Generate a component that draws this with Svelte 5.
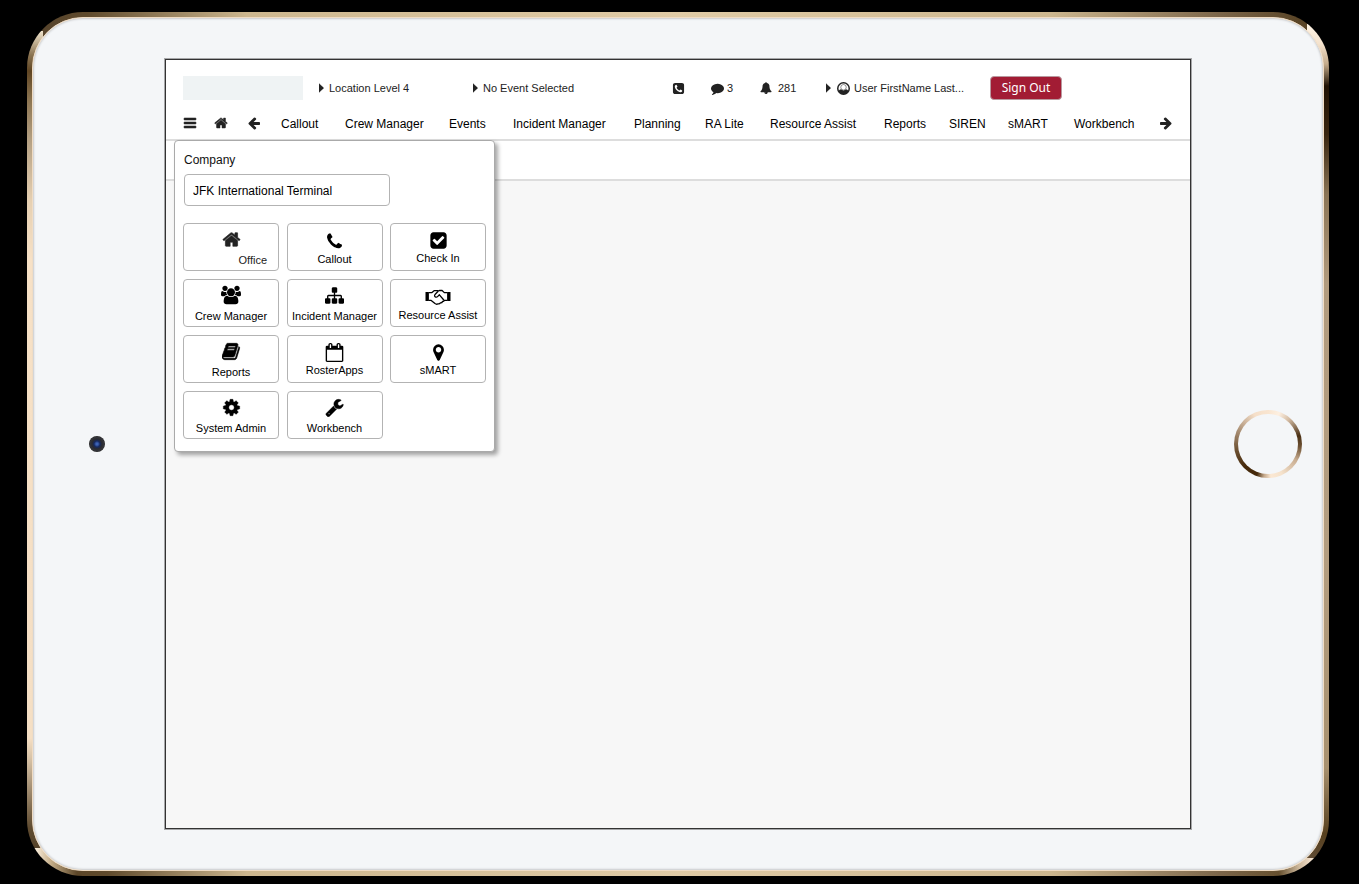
<script>
  const paths = {
    bars: "M1664 1344v128q0 26-19 45t-45 19h-1408q-26 0-45-19t-19-45v-128q0-26 19-45t45-19h1408q26 0 45 19t19 45zm0-512v128q0 26-19 45t-45 19h-1408q-26 0-45-19t-19-45v-128q0-26 19-45t45-19h1408q26 0 45 19t19 45zm0-512v128q0 26-19 45t-45 19h-1408q-26 0-45-19t-19-45v-128q0-26 19-45t45-19h1408q26 0 45 19t19 45z",
    home: "M1472 992v480q0 26-19 45t-45 19h-384v-384h-256v384h-384q-26 0-45-19t-19-45v-480q0-1 .5-3t.5-3l575-474 575 474q1 2 1 6zm223-69l-62 74q-8 9-21 11h-3q-13 0-21-7l-692-577-692 577q-12 8-24 7-13-2-21-11l-62-74q-8-10-7-23.5t11-21.5l719-599q32-26 76-26t76 26l244 204v-195q0-14 9-23t23-9h192q14 0 23 9t9 23v408l219 182q10 8 11 21.5t-7 23.5z",
    arrow: "M1664 896v128q0 53-32.5 90.5t-84.5 37.5h-704l293 294q38 36 38 90t-38 90l-75 76q-37 37-90 37-52 0-91-37l-651-652q-37-37-37-90 0-52 37-91l651-650q38-38 91-38 52 0 90 38l75 74q38 38 38 91t-38 91l-293 293h704q52 0 84.5 37.5t32.5 90.5z",
    phoneSquare: "M1408 1193q0-11-2-16t-18-16.5-40.5-25-47.5-26.5-45.5-25-28.5-15q-5-3-19-13t-25-15-21-5q-15 0-36.5 20.5t-39.5 45-38.5 45-33.5 20.5q-7 0-16.5-3.5t-15.5-6.5-17-9.5-14-8.5q-99-55-170-126.5t-127-170.5q-2-3-8.5-14t-9.5-17-6.5-15.5-3.5-16.5q0-13 20.5-33.5t45-38.5 45-39.5 20.5-36.5q0-10-5-21t-15-25-13-19q-3-6-15-28.5t-25-45.5-26.5-47.5-25-40.5-16.5-18-16-2q-48 0-101 22-46 21-80 94.5t-34 130.5q0 16 2.5 34t5 30.5 9 33 10 29.5 12.5 33 11 30q60 164 216.5 320.5t320.5 216.5q6 2 30 11t33 12.5 29.5 10 33 9 30.5 5 34 2.5q57 0 130.5-34t94.5-80q22-53 22-101zm256-777v960q0 119-84.5 203.5t-203.5 84.5h-960q-119 0-203.5-84.5t-84.5-203.5v-960q0-119 84.5-203.5t203.5-84.5h960q119 0 203.5 84.5t84.5 203.5z",
    comment: "M1792 896q0 174-120 321.5t-326 233-450 85.5q-70 0-145-8-198 175-460 242-49 14-114 22-17 2-30.5-9t-17.5-29v-1q-3-4-.5-12t2-10 4.5-9.5l6-9 7-8.5 8-9q7-8 31-34.5t34.5-38 31-39.5 32.5-51 27-59 26-76q-157-89-247.5-220t-90.5-281q0-130 71-248.5t191-204.5 286-136.5 348-50.5q244 0 450 85.5t326 233 120 321.5z",
    bell: "M912 1696q0-16-16-16-59 0-101.5-42.5t-42.5-101.5q0-16-16-16t-16 16q0 73 51.5 124.5t124.5 51.5q16 0 16-16zm816-288q0 52-38 90t-90 38h-448q0 106-75 181t-181 75-181-75-75-181h-448q-52 0-90-38t-38-90q50-42 91-88t85-119.5 74.5-158.5 50-206 19.5-260q0-152 117-282.5t307-158.5q-8-19-8-39 0-40 28-68t68-28 68 28 28 68q0 20-8 39 190 28 307 158.5t117 282.5q0 139 19.5 260t50 206 74.5 158.5 85 119.5 91 88z",
    phone: "M1600 1240q0 27-10 70.5t-21 68.5q-21 50-122 106-94 51-186 51-27 0-53-3.5t-57.5-12.5-47-14.5-55.5-20.5-49-18q-98-35-175-83-127-79-264-216t-216-264q-48-77-83-175-3-9-18-49t-20.5-55.5-14.5-47-12.5-57.5-3.5-53q0-92 51-186 56-101 106-122 25-11 68.5-21t70.5-10q14 0 21 3 18 6 53 76 11 19 30 54t35 63.5 31 53.5q3 4 17.5 25t21.5 35.5 7 28.5q0 20-28.5 50t-62 55-62 53-28.5 46q0 9 5 22.5t8.5 20.5 14 24 11.5 19q76 137 174 235t235 174q2 1 19 11.5t24 14 20.5 8.5 22.5 5q18 0 46-28.5t53-62 55-62 50-28.5q14 0 28.5 7t35.5 21.5 25 17.5q25 15 53.5 31t63.5 35 54 30q70 35 76 53 3 7 3 21z",
    check: "M813 1299l614-614q19-19 19-45t-19-45l-102-102q-19-19-45-19t-45 19l-467 467-211-211q-19-19-45-19t-45 19l-102 102q-19 19-19 45t19 45l358 358q19 19 45 19t45-19zm851-883v960q0 119-84.5 203.5t-203.5 84.5h-960q-119 0-203.5-84.5t-84.5-203.5v-960q0-119 84.5-203.5t203.5-84.5h960q119 0 203.5 84.5t84.5 203.5z",
    users: "M529 896q-162 5-265 128h-134q-82 0-138-40.5t-56-118.5q0-353 124-353 6 0 43.500 21t97.500 42.500 119 21.500q67 0 133-23-5 37-5 66 0 139 81 256zm1071 637q0 120-73 189.500t-194 69.500h-874q-121 0-194-69.500t-73-189.500q0-53 3.500-103.500t14-109 26.500-108.500 43-97.500 62-81 85.500-53.500 111.500-20q10 0 43 21.500t73 48 107 48 135 21.500 135-21.500 107-48 73-48 43-21.500q61 0 111.500 20t85.500 53.500 62 81 43 97.500 26.500 108.500 14 109 3.500 103.500zm-1024-1277q0 106-75 181t-181 75-181-75-75-181 75-181 181-75 181 75 75 181zm704 384q0 159-112.500 271.500t-271.500 112.500-271.500-112.500-112.500-271.500 112.500-271.500 271.500-112.500 271.500 112.500 112.500 271.500zm576 225q0 78-56 118.500t-138 40.500h-134q-103-123-265-128 81-117 81-256 0-29-5-66 66 23 133 23 59 0 119-21.500t97.500-42.500 43.500-21q124 0 124 353zm-128-609q0 106-75 181t-181 75-181-75-75-181 75-181 181-75 181 75 75 181z",
    sitemap: "M1792 1248v320q0 40-28 68t-68 28h-320q-40 0-68-28t-28-68v-320q0-40 28-68t68-28h96v-192h-512v192h96q40 0 68 28t28 68v320q0 40-28 68t-68 28h-320q-40 0-68-28t-28-68v-320q0-40 28-68t68-28h96v-192h-512v192h96q40 0 68 28t28 68v320q0 40-28 68t-68 28h-320q-40 0-68-28t-28-68v-320q0-40 28-68t68-28h96v-192q0-52 38-90t90-38h512v-192h-96q-40 0-68-28t-28-68v-320q0-40 28-68t68-28h320q40 0 68 28t28 68v320q0 40-28 68t-68 28h-96v192h512q52 0 90 38t38 90v192h96q40 0 68 28t28 68z",
    book: "M1639 478q40 57 18 129l-275 906q-19 64-76.5 107.5t-122.5 43.5h-923q-77 0-148.5-53.5t-99.5-131.5q-24-67-2-127 0-4 3-27t4-37q1-8-3-21.5t-3-19.5q2-11 8-21t16.5-23.5 16.5-23.5q23-38 45-91.5t30-91.5q3-10 .5-30t-.5-28q3-11 17-28t17-23q21-36 42-92t25-90q1-9-2.5-32t.5-28q4-13 22-30.5t22-22.5q19-26 42.5-84.5t27.5-96.5q1-8-3-25.5t-2-26.5q2-8 9-18t18-23 17-21q8-12 16.5-30.5t15-35 16-36 19.5-32 26.5-23.5 36-11.5 47.5 5.5l-1 3q38-9 51-9h761q74 0 114 56t18 130l-274 906q-36 119-71.5 153.5t-128.5 34.5h-869q-27 0-38 15-11 16-1 43 24 70 144 70h923q29 0 56-15.5t35-41.5l300-987q7-22 5-57 38 15 59 43zm-1064 2q-4 13 2 22.5t20 9.5h608q13 0 25.5-9.5t16.5-22.5l21-64q4-13-2-22.5t-20-9.5h-608q-13 0-25.5 9.5t-16.5 22.5zm-83 256q-4 13 2 22.5t20 9.5h608q13 0 25.5-9.5t16.5-22.5l21-64q4-13-2-22.5t-20-9.5h-608q-13 0-25.5 9.5t-16.5 22.5z",
    calendar: "M192 1664h1408v-1024h-1408v1024zm384-1216v-288q0-14-9-23t-23-9h-64q-14 0-23 9t-9 23v288q0 14 9 23t23 9h64q14 0 23-9t9-23zm768 0v-288q0-14-9-23t-23-9h-64q-14 0-23 9t-9 23v288q0 14 9 23t23 9h64q14 0 23-9t9-23zm384-64v1280q0 52-38 90t-90 38h-1408q-52 0-90-38t-38-90v-1280q0-52 38-90t90-38h128v-96q0-66 47-113t113-47h64q66 0 113 47t47 113v96h384v-96q0-66 47-113t113-47h64q66 0 113 47t47 113v96h128q52 0 90 38t38 90z",
    marker: "M1152 640q0-106-75-181t-181-75-181 75-75 181 75 181 181 75 181-75 75-181zm256 0q0 109-33 179l-364 774q-16 33-47.5 52t-67.5 19-67.5-19-46.5-52l-365-774q-33-70-33-179 0-212 150-362t362-150 362 150 150 362z",
    cog: "M1152 896q0-106-75-181t-181-75-181 75-75 181 75 181 181 75 181-75 75-181zm512-109v222q0 12-8 23t-20 13l-185 28q-19 54-39 91 35 50 107 138 10 12 10 25t-9 23q-27 37-99 108t-94 71q-12 0-26-9l-138-108q-44 23-91 38-16 136-29 186-7 28-36 28h-222q-14 0-24.5-8.5t-11.5-21.5l-28-184q-49-16-90-37l-141 107q-10 9-25 9-14 0-25-11-126-114-165-168-7-10-7-23 0-12 8-23 15-21 51-66.5t54-70.5q-27-50-41-99l-183-27q-13-2-21-12.5t-8-23.5v-222q0-12 8-23t19-13l186-28q14-46 39-92-40-57-107-138-10-12-10-24 0-10 9-23 26-36 98.5-107.5t94.5-71.5q13 0 26 10l138 107q44-23 91-38 16-136 29-186 7-28 36-28h222q14 0 24.5 8.5t11.5 21.5l28 184q49 16 90 37l142-107q9-9 24-9 13 0 25 10 129 119 165 170 7 8 7 22 0 12-8 23-15 21-51 66.5t-54 70.5q26 50 41 98l183 28q13 2 21 12.5t8 23.5z",
    wrench: "M448 1472q0-26-19-45t-45-19-45 19-19 45 19 45 45 19 45-19 19-45zm644-420l-682 682q-37 37-90 37-52 0-91-37l-106-108q-38-36-38-90 0-53 38-91l681-681q39 98 114.5 173.5t173.5 114.5zm634-435q0 39-23 106-47 134-164.5 217.5t-258.5 83.5q-185 0-316.5-131.5t-131.5-316.5 131.5-316.5 316.5-131.5q58 0 121.5 16.5t107.5 46.5q16 11 16 28t-16 28l-293 169v224l193 107q5-3 79-48.5t135.5-81 70.5-35.5q15 0 23.5 10t8.5 25z",
    caret: "M0 100l780 720q66 76 0 152l-780 720z",
  };

  // Extra outline, in path units, for glyphs drawn with a heavier weight
  const weight = { home: 60, bars: 70, book: 60, wrench: 40, cog: 40, caret: 40 };

  const modules = [
    "Callout", "Crew Manager", "Events", "Incident Manager", "Planning", "RA Lite",
    "Resource Assist", "Reports", "SIREN", "sMART", "Workbench",
  ];

  const tiles = [
    { label: "Office", icon: "home", size: 19, kind: "corner" },
    { label: "Callout", icon: "phone", size: 19, kind: "low" },
    { label: "Check In", icon: "check", size: 19, kind: "" },
    { label: "Crew Manager", icon: "users", size: 20, kind: "roomy" },
    { label: "Incident Manager", icon: "sitemap", size: 19, kind: "roomy" },
    { label: "Resource Assist", icon: "handshake", size: 26, kind: "low" },
    { label: "Reports", icon: "book", size: 19, kind: "roomy" },
    { label: "RosterApps", icon: "calendar", size: 19, kind: "" },
    { label: "sMART", icon: "marker", size: 19, kind: "" },
    { label: "System Admin", icon: "cog", size: 19, kind: "roomy" },
    { label: "Workbench", icon: "wrench", size: 19, kind: "roomy" },
  ];

  let company = $state("JFK International Terminal");
</script>

{#snippet icon(name, size, flip = false)}
  {#if name === "handshake"}
    <svg width={size} height="18" viewBox="0 0 26 18" aria-hidden="true">
      <path d="M0.500 4h3.400v9H0.500zM22.100 4h3.400v9h-3.400z" fill="currentColor" />
      <path
        d="M4 4.600h3L9.400 2.600h3L13 3l1.300-.5h2.800l2.200 2.100H22M4 12.400h2.200l3.800 3.200q1.600 1.200 3 .2 1.600.4 2.400-.9 1.800 0 2.100-1.400 1.500-.3 1.800-1.100H22M13.400 3L10 6.500q-1 1.600.3 2.400 1.300.7 2.500-.5l1.600-1.600 4.400 5.200"
        fill="none" stroke="currentColor" stroke-width="1.300" stroke-linejoin="round" />
    </svg>
  {:else}
    <svg width={size} height={size} viewBox={name === "users" ? "-64 0 1920 1792" : "0 0 1792 1792"} class:flip aria-hidden="true">
      <path d={paths[name]} fill="currentColor" stroke="currentColor" stroke-width={weight[name] ?? 0} />
    </svg>
  {/if}
{/snippet}

<main class="device">
  <div class="face">
    <div class="side"><span class="camera"></span></div>

    <div class="screen">
      <header>
        <div class="status">
          <div class="logo"></div>
          <button class="plain pick">{@render icon("caret", 10)}<span>Location Level 4</span></button>
          <button class="plain pick">{@render icon("caret", 10)}<span>No Event Selected</span></button>
          <button class="plain" aria-label="Phone">{@render icon("phoneSquare", 13)}</button>
          <button class="plain count">{@render icon("comment", 13)}<span>3</span></button>
          <button class="plain alerts">{@render icon("bell", 12)}<span>281</span></button>
          <button class="plain pick">
            {@render icon("caret", 10)}
            <svg class="avatar" width="13" height="13" viewBox="0 0 26 26" aria-hidden="true">
              <circle cx="13" cy="13" r="11.500" fill="#fff" stroke="currentColor" stroke-width="3" />
              <path d="M3 18q2-3 5-3.500 5 4.500 10 0 3 .5 5 3.500-3 6.500-10 6.500T3 18z" fill="currentColor" />
              <circle cx="13" cy="10.500" r="5.500" fill="#fff" stroke="currentColor" stroke-width="1" />
            </svg>
            <span>User FirstName Last...</span>
          </button>
          <div><button class="signout">Sign Out</button></div>
        </div>

        <nav>
          <button class="plain" aria-label="Menu">{@render icon("bars", 14)}</button>
          <button class="plain" aria-label="Home">{@render icon("home", 14)}</button>
          <button class="plain" aria-label="Previous">{@render icon("arrow", 14)}</button>
          {#each modules as name}
            <a href="#{name}">{name}</a>
          {/each}
          <button class="plain" aria-label="Next">{@render icon("arrow", 14, true)}</button>
        </nav>
      </header>

      <div class="subbar"></div>

      <section class="menu">
        <label for="company">Company</label>
        <input id="company" type="text" bind:value={company} />
        <div class="tiles">
          {#each tiles as t}
            <button class="tile {t.kind}">
              <span class="glyph">{@render icon(t.icon, t.size)}</span>
              <span class="name">{t.label}</span>
            </button>
          {/each}
        </div>
      </section>
    </div>

    <div class="side"><button class="homekey" aria-label="Home button"></button></div>
  </div>
</main>

<style>
  :global(body) {
    background: #000;
  }
  .device,
  .device * {
    box-sizing: border-box;
  }
  .device {
    display: flex;
    min-height: calc(100vh - 20px);
    margin: 12px 30px 8px 27px;
    padding: 5px;
    border-radius: 56px;
    font-family: "Liberation Sans", Arial, sans-serif;
    background:
      linear-gradient(#f0e4cc, #8b7452 24px, #5f4523 40px, #8d7653 70px, #b5a184 110px, #e6d0b2 170px, #f7e1c6 230px, #f5dfc4 calc(100% - 110px), #d8c3a7 calc(100% - 90px), #5f4b30 calc(100% - 20px), #56432a) 0 19px / 16px calc(100% - 47px) no-repeat,
      linear-gradient(#fff5e6, #f4e2cd 20px, #c4ab8b 40px, #201204 62px, #392510 110px, #8a7455 170px, #b19b7e 260px, #b39d80 calc(100% - 300px), #a8916f calc(100% - 90px), #57401e calc(100% - 24px), #5f4b34) 100% 12px / 22px calc(100% - 30px) no-repeat,
      linear-gradient(90deg, #f5e8d5 10px, #c4ad88 24px, #5c4628 50px, #5f4a2c 80px, #cdb78f 220px, #e0cba6 50%, #cdb78f calc(100% - 280px), #7c664a calc(100% - 110px), #66502f calc(100% - 50px), #cdb89c calc(100% - 30px), #f2e0cc calc(100% - 18px)) 0 100% / 100% 28px no-repeat,
      linear-gradient(90deg, #54422c, #5f4a2c 60px, #cdb78f 220px, #e0cba6 50%, #cdb78f calc(100% - 280px), #7c664a calc(100% - 110px), #5a4527 calc(100% - 30px));
  }
  .face {
    flex: 1;
    display: flex;
    min-width: 0;
    padding: 41px 0;
    border: 1px solid #f0dcc4;
    border-radius: 51px;
    background: #f4f6f8;
    box-shadow: inset 0 0 2px 1px #c9cbcd;
  }
  .side {
    flex: 0 0 132px;
    display: flex;
    align-items: center;
    justify-content: center;
  }
  .side:last-child {
    justify-content: flex-end;
    padding-right: 21px;
  }
  .camera {
    width: 16px;
    height: 16px;
    margin-right: 4px;
    border-radius: 50%;
    background: radial-gradient(circle, #3d63b5 0 1px, #16295f 3px, #2a2b30 5px, #34353a 7px, #222 8px);
  }
  .homekey {
    width: 68px;
    height: 68px;
    padding: 0;
    border: 4px solid transparent;
    border-radius: 50%;
    background:
      linear-gradient(#f4f6f8, #f4f6f8) padding-box,
      conic-gradient(#f9e5d0, #fdf0e2 20deg, #d5bda5 40deg, #4a3014 75deg, #6e5234 95deg, #c9ae92 120deg, #f5e2cc 155deg, #fbe8d3 175deg, #c4a88b 187deg, #45290b 200deg, #45290b 225deg, #6e5234 260deg, #b49a80 300deg, #f5dfc9 335deg, #f9e5d0) border-box;
  }
  .screen {
    position: relative;
    flex: 1;
    min-width: 0;
    border: 1px solid #333;
    background: #f7f7f7;
    box-shadow: 0 0 0 1px rgba(51, 51, 51, 0.4);
  }
  header {
    padding: 7px 0 0 17px;
    border-bottom: 2px solid #ddd;
    background: #fff;
  }
  .status {
    display: grid;
    grid-template-columns:
      minmax(0, 136fr) minmax(0, 154fr) minmax(0, 199fr) minmax(0, 39fr)
      minmax(0, 49fr) minmax(0, 66fr) minmax(0, 164fr) minmax(0, 200fr);
    align-items: center;
    height: 42px;
    color: #222;
  }
  .logo {
    width: 120px;
    height: 24px;
    background: #eff3f4;
  }
  svg {
    display: block;
    flex: none;
  }
  .flip {
    transform: scaleX(-1);
  }
  .plain {
    display: flex;
    align-items: center;
    gap: 4px;
    padding: 0;
    border: 0;
    background: none;
    color: #222;
    font: 11px "Liberation Sans", Arial, sans-serif;
    white-space: nowrap;
  }
  .pick {
    gap: 0;
  }
  .avatar {
    margin: 0 4px 0 1px;
  }
  .count {
    gap: 3px;
  }
  .alerts {
    gap: 6px;
  }
  .signout {
    display: block;
    width: 72px;
    height: 24px;
    padding: 0;
    border: 1px solid #b9999f;
    border-radius: 4px;
    background: #a21c34;
    color: #fff;
    font: 12px/20px "Noto Sans", sans-serif;
  }
  nav {
    display: grid;
    grid-template-columns:
      minmax(0, 31fr) minmax(0, 33fr) minmax(0, 34fr) minmax(0, 64fr) minmax(0, 104fr)
      minmax(0, 64fr) minmax(0, 121fr) minmax(0, 71fr) minmax(0, 65fr) minmax(0, 114fr)
      minmax(0, 65fr) minmax(0, 59fr) minmax(0, 66fr) minmax(0, 85fr) minmax(0, 31fr);
    align-items: center;
    height: 30px;
  }
  nav .plain {
    height: 16px;
    padding-bottom: 2px;
  }
  nav a {
    color: #000;
    font-size: 12px;
    text-decoration: none;
    white-space: nowrap;
  }
  .subbar {
    height: 40px;
    border-bottom: 2px solid #ddd;
    background: #fff;
  }
  .menu {
    position: absolute;
    top: 80px;
    left: 8px;
    padding: 12px 8px;
    border: 1px solid #aaa;
    border-radius: 4px;
    background: #fff;
    box-shadow: 3px 3px 4px rgba(0, 0, 0, 0.35);
  }
  .menu label {
    display: block;
    padding-left: 1px;
    color: #111;
    font-size: 12px;
    line-height: 14px;
  }
  .menu input {
    display: block;
    width: 206px;
    height: 32px;
    margin: 7px 0 17px 1px;
    padding: 2px 8px 0;
    border: 1px solid #b3b3b3;
    border-radius: 4px;
    background: #fff;
    color: #000;
    font: 12px "Liberation Sans", Arial, sans-serif;
  }
  .tiles {
    display: grid;
    grid-template-columns: repeat(3, 96px);
    justify-content: space-between;
    row-gap: 8px;
    width: 303px;
  }
  .tile {
    display: flex;
    flex-direction: column;
    align-items: center;
    height: 48px;
    padding: 6px 0 0;
    border: 1px solid #b3b3b3;
    border-radius: 4px;
    background: #fff;
    color: #000;
    font: 11px "Liberation Sans", Arial, sans-serif;
  }
  .glyph {
    display: flex;
    align-items: center;
    height: 20px;
  }
  .name {
    margin-top: 1px;
    line-height: 14px;
    white-space: nowrap;
  }
  .low {
    padding-top: 7px;
  }
  .roomy {
    padding-top: 5px;
  }
  .roomy .name,
  .corner .name {
    margin-top: 4px;
  }
  .corner {
    padding-top: 5px;
    color: #222;
  }
  .corner .name {
    align-self: flex-end;
    margin-right: 11px;
  }
</style>
